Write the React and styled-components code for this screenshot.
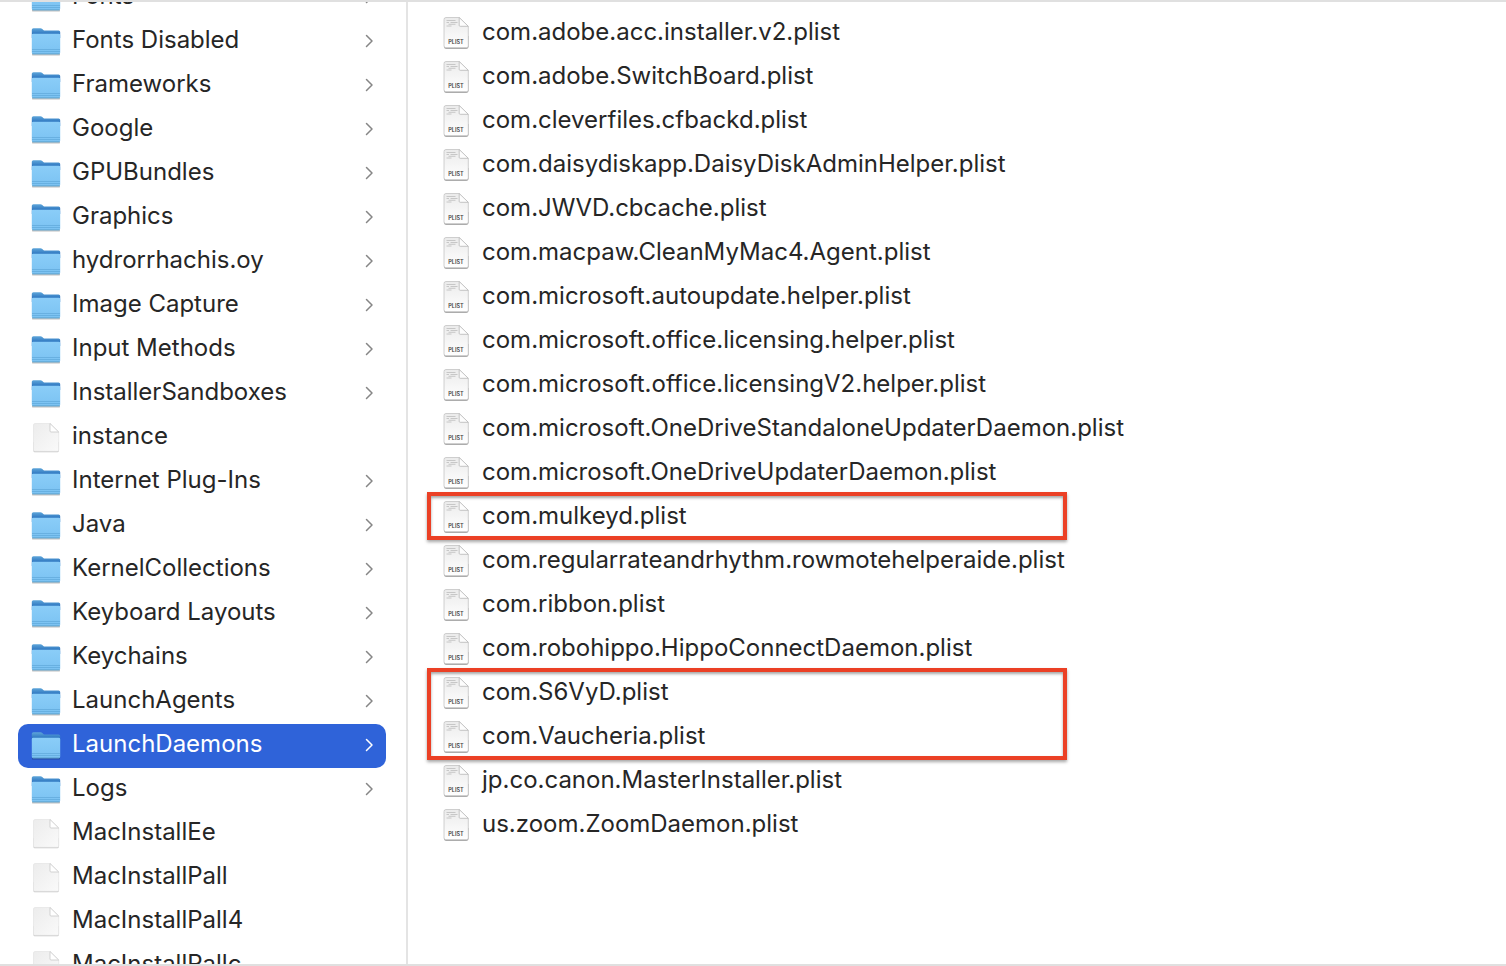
import React, { useState } from 'react';
import styled, { createGlobalStyle } from 'styled-components';

const GlobalStyle = createGlobalStyle`
    *, *::after {
        box-sizing:border-box;
    }

    body {
        margin:0;
        background:#ffffff;
        color:#262626;
        font-family:Inter, sans-serif;
        font-size:24px;
    }
`

const Browser = styled.main`
    display:flex;
    height:100vh;
    overflow:hidden;
    border-top:2px solid #e0e0e0;
    border-bottom:2px solid #e0e0e0;
`

const FolderColumn = styled.nav`
    flex:none;
    width:408px;
    padding:0 20px 0 18px;
    overflow:hidden;
    border-right:2px solid #e4e4e4;
`

const FileColumn = styled.section`
    flex:1;
    min-width:0;
    padding:10px 19px;
    overflow:hidden;
`

const List = styled.ul`
    margin:0;
    padding:0;
    list-style:none;
`

/* the folder list is scrolled down a little, its first row is cut */
const ScrolledList = styled(List)`
    margin-top:-26px;
`

const Row = styled.button`
    display:flex;
    align-items:center;
    width:100%;
    height:44px;
    padding:0 12px;
    border:0;
    border-radius:10px;
    background:${props => props.$selected ? '#2f63d9' : 'transparent'};
    color:${props => props.$selected ? '#ffffff' : 'inherit'};
    font:inherit;
    text-align:left;
`

const FileRow = styled(Row)`
    padding:0 14px;
`

const Name = styled.span`
    flex:1;
    padding:0 0 4px 10px;
    line-height:32px;
    white-space:nowrap;
`

const Marked = styled.li`
    position:relative;

    &::after {
        content:'';
        position:absolute;
        top:-4px;
        bottom:0;
        left:0;
        width:640px;
        border:4px solid #eb4025;
        box-shadow:0 2px 3px rgba(0,0,0,0.35), inset 0 2px 3px rgba(0,0,0,0.35);
        pointer-events:none;
    }
`

const Icon = styled.svg`
    flex:none;
    display:block;
`

const Defs = styled.svg`
    position:absolute;
`

function Gradients() {
    return (
        <Defs width="0" height="0" aria-hidden="true">
            <defs>
                <linearGradient id="front" x1="0" y1="0" x2="0" y2="1">
                    <stop offset="0" stopColor="#8acdf8" />
                    <stop offset="1" stopColor="#7bc2f2" />
                </linearGradient>
                <linearGradient id="back" x1="0" y1="0" x2="0" y2="1">
                    <stop offset="0" stopColor="#5ea6da" />
                    <stop offset="0.55" stopColor="#3179c2" />
                </linearGradient>
                <linearGradient id="paper" x1="0" y1="0" x2="1" y2="1">
                    <stop offset="0" stopColor="#ececec" />
                    <stop offset="1" stopColor="#fafafa" />
                </linearGradient>
                <linearGradient id="sheet" x1="0" y1="0" x2="0" y2="1">
                    <stop offset="0" stopColor="#ebebeb" />
                    <stop offset="1" stopColor="#ffffff" />
                </linearGradient>
            </defs>
        </Defs>
    );
}

function FolderIcon() {
    return (
        <Icon width="32" height="32" viewBox="0 0 32 32" aria-hidden="true">
            <path d="M2 27h28v1.400q0 1.200-1 1.200H3q-1 0-1-1.200z" fill="#000" opacity="0.25" />
            <path d="M1.800 3.800Q1.800 2.200 3.400 2.200H10.500q1 0 1.800.8l1 .9q.7.600 1.700.6H28.600Q30.200 4.500 30.200 6v6H1.800z" fill="url(#back)" />
            <path d="M1.800 9.200q0-1.400 1.400-1.400h25.600q1.400 0 1.400 1.400v17.400q0 1.600-1.400 1.600H3.200q-1.400 0-1.400-1.600z" fill="url(#front)" />
            <path d="M2 23.500h28M2 25.500h28" stroke="#62abdc" strokeWidth="0.8" />
            <path d="M2.400 27.800h27.200" stroke="#5a9fcc" strokeWidth="0.8" />
        </Icon>
    );
}

function PageIcon() {
    return (
        <Icon width="32" height="32" viewBox="0 0 32 32" aria-hidden="true">
            <path d="M3.500 20H28.700V29Q28.700 30.300 27.500 30.300H4.700Q3.500 30.300 3.500 29z" fill="#c6c6c6" />
            <path d="M3.500 3Q3.500 1.500 5 1.500H20L28.700 10V28Q28.700 29.300 27.500 29.300H4.700Q3.500 29.300 3.500 28z" fill="url(#paper)" stroke="#e0e0e0" strokeWidth="0.6" />
            <path d="M20 1.500V9Q20 10 21 10H28.700z" fill="#fff" stroke="#c8c8c8" strokeWidth="0.8" />
        </Icon>
    );
}

function PlistIcon() {
    return (
        <Icon width="31" height="34" viewBox="0 1 31 34" aria-hidden="true">
            <path d="M3 20H27.500V30.800Q27.500 32.800 25.500 32.800H5Q3 32.800 3 30.800z" fill="#8c8c8c" />
            <path d="M3 3.500Q3 1.500 5 1.500H18L27.300 10.500V30Q27.300 31.700 25.500 31.700H4.800Q3 31.700 3 30z" fill="url(#sheet)" stroke="#c4c4c4" strokeWidth="0.8" />
            <path d="M5.500 4.500h9M5.500 6.500h2.500M9.500 6.500h7M7.500 8.300h7M5.500 10h5" fill="none" stroke="#bcbcbc" strokeWidth="0.8" />
            <path d="M18.200 1.500V9.300Q18.200 10.300 19.200 10.300H27.300z" fill="#fdfdfd" stroke="#b8b8b8" strokeWidth="0.8" />
            <text x="15" y="28" textAnchor="middle" fontFamily="Inter, sans-serif" fontSize="5.5" fontWeight="600" fill="#444">PLIST</text>
        </Icon>
    );
}

function Chevron() {
    return (
        <Icon width="10" height="16" viewBox="0 0 10 16" aria-hidden="true">
            <path d="M2.500 1.500L8 7L2.500 12.500" fill="none" stroke="currentColor" strokeWidth="1.5" strokeLinecap="round" strokeLinejoin="round" />
        </Icon>
    );
}

const Arrow = styled.span`
    color:${props => props.$selected ? '#ffffff' : '#868686'};
`

const entries = [
    { name: 'Fonts', folder: true },
    { name: 'Fonts Disabled', folder: true },
    { name: 'Frameworks', folder: true },
    { name: 'Google', folder: true },
    { name: 'GPUBundles', folder: true },
    { name: 'Graphics', folder: true },
    { name: 'hydrorrhachis.oy', folder: true },
    { name: 'Image Capture', folder: true },
    { name: 'Input Methods', folder: true },
    { name: 'InstallerSandboxes', folder: true },
    { name: 'instance' },
    { name: 'Internet Plug-Ins', folder: true },
    { name: 'Java', folder: true },
    { name: 'KernelCollections', folder: true },
    { name: 'Keyboard Layouts', folder: true },
    { name: 'Keychains', folder: true },
    { name: 'LaunchAgents', folder: true },
    { name: 'LaunchDaemons', folder: true },
    { name: 'Logs', folder: true },
    { name: 'MacInstallEe' },
    { name: 'MacInstallPall' },
    { name: 'MacInstallPall4' },
    { name: 'MacInstallPallc' },
];

const fileGroups = [
    {
        files: [
            'com.adobe.acc.installer.v2.plist',
            'com.adobe.SwitchBoard.plist',
            'com.cleverfiles.cfbackd.plist',
            'com.daisydiskapp.DaisyDiskAdminHelper.plist',
            'com.JWVD.cbcache.plist',
            'com.macpaw.CleanMyMac4.Agent.plist',
            'com.microsoft.autoupdate.helper.plist',
            'com.microsoft.office.licensing.helper.plist',
            'com.microsoft.office.licensingV2.helper.plist',
            'com.microsoft.OneDriveStandaloneUpdaterDaemon.plist',
            'com.microsoft.OneDriveUpdaterDaemon.plist',
        ],
    },
    { marked: true, files: ['com.mulkeyd.plist'] },
    {
        files: [
            'com.regularrateandrhythm.rowmotehelperaide.plist',
            'com.ribbon.plist',
            'com.robohippo.HippoConnectDaemon.plist',
        ],
    },
    { marked: true, files: ['com.S6VyD.plist', 'com.Vaucheria.plist'] },
    { files: ['jp.co.canon.MasterInstaller.plist', 'us.zoom.ZoomDaemon.plist'] },
];

function File({ name }) {
    return (
        <FileRow type="button">
            <PlistIcon />
            <Name>{name}</Name>
        </FileRow>
    );
}

function App() {
    const [selected, setSelected] = useState('LaunchDaemons');

    return (
        <Browser>
            <GlobalStyle />
            <Gradients />
            <FolderColumn>
                <ScrolledList>
                    {entries.map(({ name, folder }) => (
                        <li key={name}>
                            <Row type="button" $selected={name === selected} onClick={() => setSelected(name)}>
                                {folder ? <FolderIcon /> : <PageIcon />}
                                <Name>{name}</Name>
                                {folder && <Arrow $selected={name === selected}><Chevron /></Arrow>}
                            </Row>
                        </li>
                    ))}
                </ScrolledList>
            </FolderColumn>
            <FileColumn>
                <List>
                    {fileGroups.map(({ marked, files }) => {
                        const Group = marked ? Marked : 'li';
                        return (
                            <Group key={files[0]}>
                                {files.map(name => <File key={name} name={name} />)}
                            </Group>
                        );
                    })}
                </List>
            </FileColumn>
        </Browser>
    );
}

export default App;
